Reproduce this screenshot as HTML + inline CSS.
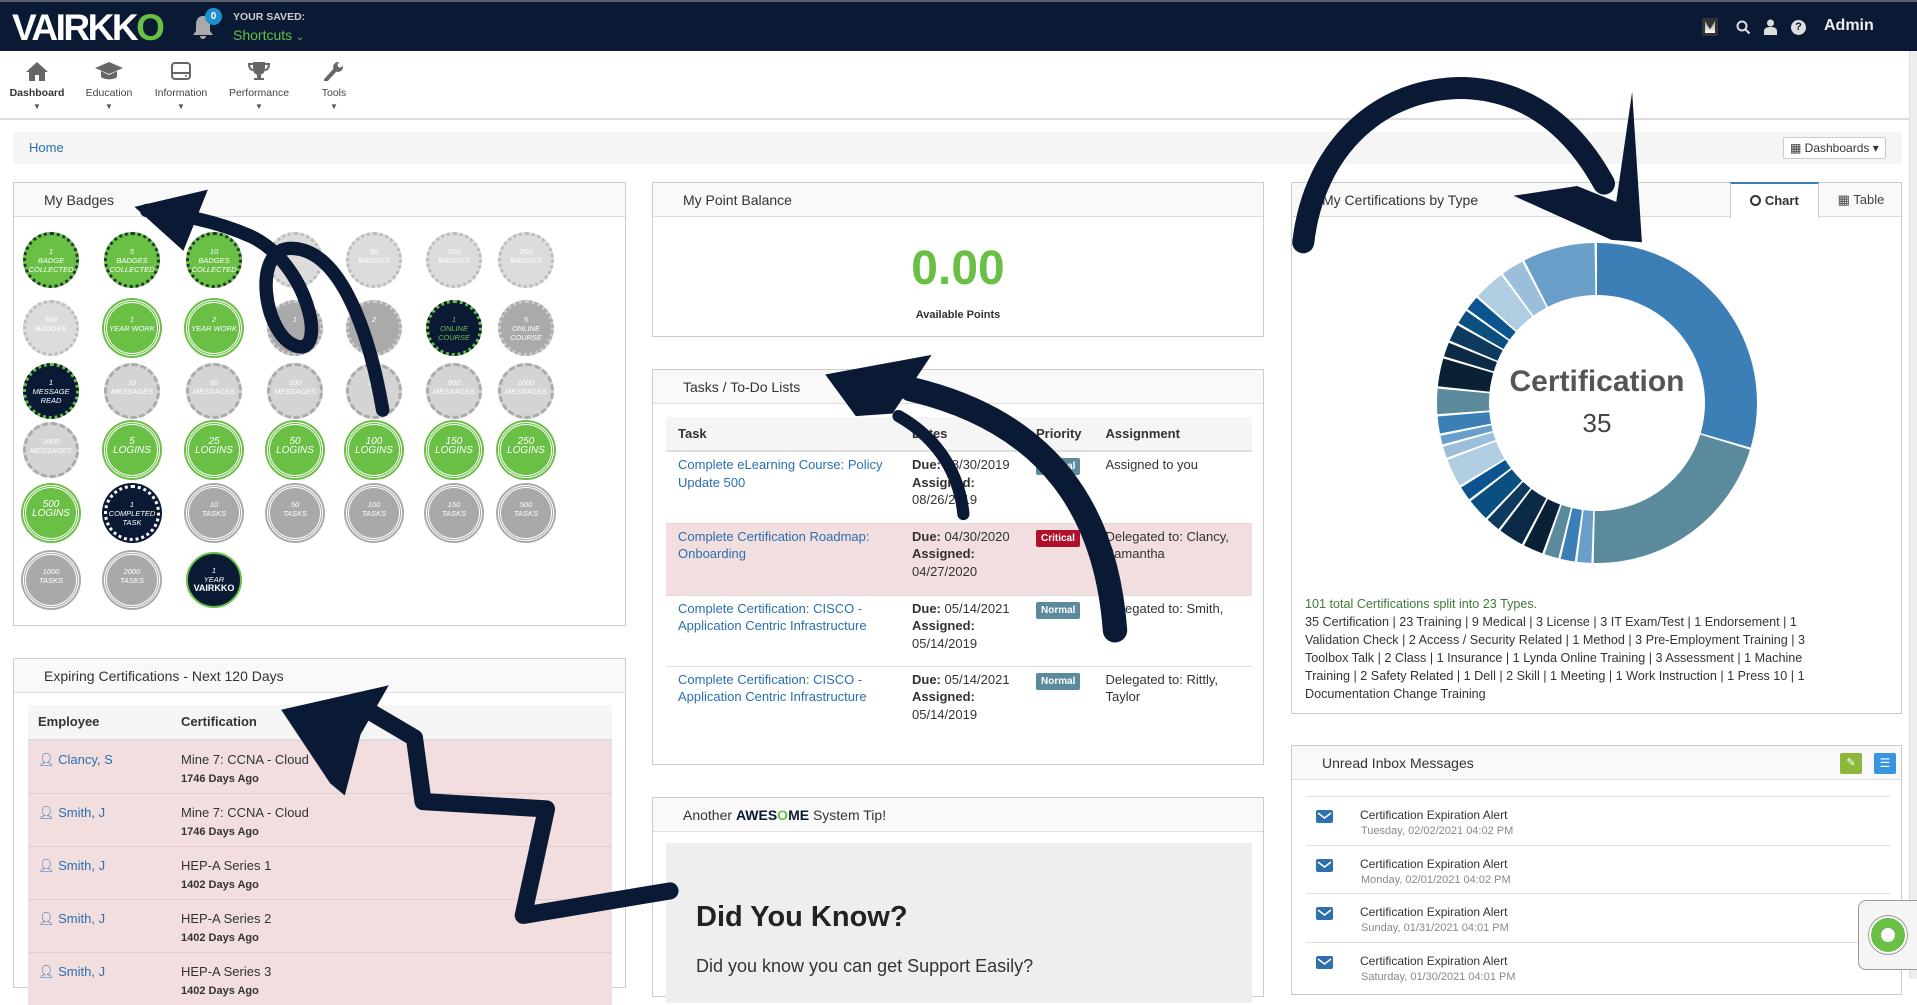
<!DOCTYPE html>
<html><head><meta charset="utf-8">
<style>
*{box-sizing:border-box;margin:0;padding:0}
body{width:1917px;height:979px;overflow:hidden;background:#fff;font-family:"Liberation Sans",sans-serif;font-size:13px;color:#333;position:relative}
.a{position:absolute}
.nav{left:0;top:0;width:1917px;height:51px;background:#0a1a35;border-top:2px solid #5a6070}
.menu{top:51px;left:0;width:1917px;height:69px;border-bottom:2px solid #ddd}
.mi{position:absolute;top:10px;text-align:center;font-size:10.5px;color:#444;width:80px;margin-left:-40px}
.mi svg{display:block;margin:0 auto 6px}
.mi .c{font-size:8px;color:#555;margin-top:3px}
.panel{position:absolute;border:1px solid #ccc;background:#fff}
.ph{height:34px;background:#f9f9f9;border-bottom:1px solid #ddd;padding:0 0 0 30px;line-height:34px;font-size:14px;color:#333}
.badge{position:absolute;width:56px;height:56px;border-radius:50%;margin:-28px 0 0 -28px;color:#fff;font-size:7.5px;text-align:center;line-height:9px;padding-top:12px;font-style:italic}
.g{background:#6abf45;border:3px dotted #1d3a2a}
.gw{background:#6abf45;border:3px double #fff;box-shadow:0 0 0 2px #6abf45}
.l{background:#dcdcdc;border:3px dotted #bbb}
.m{background:#aaa;border:3px dotted #ccc}
.n{background:#0a1a35;border:3px dotted #6abf45;color:#6abf45}
.lm{background:#d4d4d4;border:3px dashed #aaa}
.gm{background:#a9a9a9;border:3px double #fff;box-shadow:0 0 0 2px #aaa}
table{border-collapse:collapse}
.tk td{vertical-align:top;padding:4px 12px 0 12px;font-size:13px;line-height:17.5px;color:#333}
.tk a,.ex a{color:#2a6fb0;text-decoration:none}
.lbl{display:inline-block;color:#fff;font-size:10px;font-weight:bold;padding:2px 5px;border-radius:2px;line-height:13px}
.ex td{padding:0 10px;font-size:13px;line-height:18px;vertical-align:top}
.inb{position:absolute;left:14px;width:584px;border-top:1px solid #ddd;height:48px}
</style></head><body>
<div class="a nav">
 <div class="a" style="left:12px;top:7px;font-size:37px;font-weight:bold;color:#fff;letter-spacing:-2.5px;line-height:38px">VAIRKK<span style="color:#6abf45">O</span></div>
 <svg class="a" style="left:193px;top:12px" width="20" height="26" viewBox="0 0 20 26"><path d="M10 2c-5 0-7 4-7 9v6l-3 4h20l-3-4v-6c0-5-2-9-7-9zM7 22a3 3 0 0 0 6 0z" fill="#aaa"/></svg>
 <div class="a" style="left:205px;top:6px;width:17px;height:17px;border-radius:50%;background:#1e90d0;color:#fff;font-size:10px;font-weight:bold;text-align:center;line-height:17px">0</div>
 <div class="a" style="left:233px;top:9px;color:#ccc;font-size:10.5px;font-weight:bold">YOUR SAVED:</div>
 <div class="a" style="left:233px;top:25px;color:#6abf45;font-size:14px">Shortcuts <span style="font-size:10px">&#8964;</span></div>
 <div class="a" style="left:1702px;top:16px;width:16px;height:18px;background:#333;"><div style="margin:3px;width:10px;height:12px;background:linear-gradient(#999,#fff);clip-path:polygon(0 0,50% 70%,100% 0,100% 100%,0 100%)"></div></div>
 <svg class="a" style="left:1736px;top:18px" width="15" height="15" viewBox="0 0 15 15"><circle cx="6" cy="6" r="4.5" stroke="#ddd" stroke-width="2" fill="none"/><path d="M9.5 9.5l4 4" stroke="#ddd" stroke-width="2.2"/></svg>
 <svg class="a" style="left:1764px;top:17px" width="13" height="16" viewBox="0 0 13 16"><circle cx="6.5" cy="4" r="3.5" fill="#ddd"/><path d="M0 16v-4c0-3 3-4 6.5-4s6.5 1 6.5 4v4z" fill="#ddd"/></svg>
 <div class="a" style="left:1791px;top:18px;width:15px;height:15px;border-radius:50%;background:#ddd;color:#0a1a35;font-size:11px;font-weight:bold;text-align:center;line-height:15px">?</div>
 <div class="a" style="left:1824px;top:15px;color:#eee;font-size:16px;font-weight:bold">Admin</div>
</div>
<div class="a menu">
 <div class="mi" style="left:37px;font-weight:bold;color:#333"><svg width="22" height="20" viewBox="0 0 22 20"><path d="M11 1L0 11h3v9h6v-6h4v6h6v-9h3z" fill="#666"/></svg>Dashboard<div class="c">&#9660;</div></div>
 <div class="mi" style="left:109px"><svg width="28" height="20" viewBox="0 0 28 20"><path d="M14 1L0 7l14 6 14-6z" fill="#666"/><path d="M6 10v6c3 3 13 3 16 0v-6l-8 4z" fill="#666"/></svg>Education<div class="c">&#9660;</div></div>
 <div class="mi" style="left:181px"><svg width="22" height="20" viewBox="0 0 22 20"><rect x="2" y="2" width="18" height="16" rx="3" fill="none" stroke="#666" stroke-width="2"/><path d="M2 12h18" stroke="#666" stroke-width="2"/><circle cx="16" cy="15" r="1" fill="#666"/></svg>Information<div class="c">&#9660;</div></div>
 <div class="mi" style="left:259px"><svg width="22" height="20" viewBox="0 0 22 20"><path d="M5 1h12v7c0 4-3 6-6 6s-6-2-6-6z M9 14h4v3h3v2H6v-2h3z" fill="#666"/><path d="M5 3H1c0 4 2 6 4 6M17 3h4c0 4-2 6-4 6" stroke="#666" stroke-width="2" fill="none"/></svg>Performance<div class="c">&#9660;</div></div>
 <div class="mi" style="left:334px"><svg width="22" height="20" viewBox="0 0 22 20"><path d="M3 19L13 8" stroke="#666" stroke-width="4" stroke-linecap="round"/><circle cx="15" cy="6" r="5" fill="#666"/><circle cx="17" cy="4" r="2.5" fill="#fff"/></svg>Tools<div class="c">&#9660;</div></div>
</div>
<div class="a" style="left:13px;top:132px;width:1889px;height:32px;background:#f5f5f5">
 <span class="a" style="left:16px;top:8px;color:#2a6fb0;font-size:13px">Home</span>
 <div class="a" style="left:1770px;top:5px;width:103px;height:22px;border:1px solid #ccc;background:#fff;border-radius:2px;font-size:12px;line-height:20px;padding-left:6px">&#9638; Dashboards &#9662;</div>
</div>
<div class="a" style="left:1909px;top:51px;width:8px;height:928px;background:#eee;border-left:1px solid #ddd"></div>

<!-- Badges -->
<div class="panel" style="left:13px;top:182px;width:613px;height:444px"><div class="ph">My Badges</div></div>
<div class="badge g" style="left:51px;top:260px">1<br>BADGE<br>COLLECTED</div>
<div class="badge g" style="left:132px;top:260px">5<br>BADGES<br>COLLECTED</div>
<div class="badge g" style="left:214px;top:260px">10<br>BADGES<br>COLLECTED</div>
<div class="badge l" style="left:295px;top:260px">25</div>
<div class="badge l" style="left:374px;top:260px">50<br>BADGES</div>
<div class="badge l" style="left:454px;top:260px">100<br>BADGES</div>
<div class="badge l" style="left:526px;top:260px">250<br>BADGES</div>
<div class="badge l" style="left:51px;top:328px">500<br>BADGES</div>
<div class="badge gw" style="left:132px;top:328px">1<br>YEAR WORK</div>
<div class="badge gw" style="left:214px;top:328px">2<br>YEAR WORK</div>
<div class="badge m" style="left:295px;top:328px">1</div>
<div class="badge m" style="left:374px;top:328px">2</div>
<div class="badge n" style="left:454px;top:328px">1<br>ONLINE COURSE</div>
<div class="badge m" style="left:526px;top:328px">5<br>ONLINE COURSE</div>
<div class="badge n" style="left:51px;top:391px;color:#fff">1<br>MESSAGE<br>READ</div>
<div class="badge lm" style="left:132px;top:391px">10<br>MESSAGES</div>
<div class="badge lm" style="left:214px;top:391px">50<br>MESSAGES</div>
<div class="badge lm" style="left:295px;top:391px">100<br>MESSAGES</div>
<div class="badge lm" style="left:374px;top:391px">250</div>
<div class="badge lm" style="left:454px;top:391px">500<br>MESSAGES</div>
<div class="badge lm" style="left:526px;top:391px">1000<br>MESSAGES</div>
<div class="badge lm" style="left:51px;top:450px">2000<br>MESSAGES</div>
<div class="badge gw" style="left:132px;top:450px;font-size:10px">5<br>LOGINS</div>
<div class="badge gw" style="left:214px;top:450px;font-size:10px">25<br>LOGINS</div>
<div class="badge gw" style="left:295px;top:450px;font-size:10px">50<br>LOGINS</div>
<div class="badge gw" style="left:374px;top:450px;font-size:10px">100<br>LOGINS</div>
<div class="badge gw" style="left:454px;top:450px;font-size:10px">150<br>LOGINS</div>
<div class="badge gw" style="left:526px;top:450px;font-size:10px">250<br>LOGINS</div>
<div class="badge gw" style="left:51px;top:513px;font-size:10px">500<br>LOGINS</div>
<div class="badge n" style="left:132px;top:513px;color:#fff;border-color:#fff;box-shadow:0 0 0 2px #0a1a35">1<br>COMPLETED<br>TASK</div>
<div class="badge gm" style="left:214px;top:513px">10<br>TASKS</div>
<div class="badge gm" style="left:295px;top:513px">50<br>TASKS</div>
<div class="badge gm" style="left:374px;top:513px">100<br>TASKS</div>
<div class="badge gm" style="left:454px;top:513px">150<br>TASKS</div>
<div class="badge gm" style="left:526px;top:513px">500<br>TASKS</div>
<div class="badge gm" style="left:51px;top:580px">1000<br>TASKS</div>
<div class="badge gm" style="left:132px;top:580px">2000<br>TASKS</div>
<div class="badge" style="left:214px;top:580px;background:#0a1a35;border:2px solid #6abf45">1<br>YEAR<br><b style="font-style:normal;font-size:9px">VAIRKKO</b></div>

<!-- Expiring -->
<div class="panel" style="left:13px;top:658px;width:613px;height:330px"><div class="ph">Expiring Certifications - Next 120 Days</div>
 <table class="ex a" style="left:14px;top:46px;width:584px">
  <tr style="background:#f5f5f5;height:35px;border-bottom:2px solid #ddd"><td style="width:143px;font-weight:bold;vertical-align:middle">Employee</td><td style="font-weight:bold;vertical-align:middle">Certification</td></tr>
  <tr style="background:#f2dede;height:53px;border-bottom:1px solid #e5cccc"><td style="padding-top:10px"><a>&#128100;&#xFE0E; Clancy, S</a></td><td style="padding-top:10px">Mine 7: CCNA - Cloud<br><b style="font-size:11px">1746 Days Ago</b></td></tr>
  <tr style="background:#f2dede;height:53px;border-bottom:1px solid #e5cccc"><td style="padding-top:10px"><a>&#128100;&#xFE0E; Smith, J</a></td><td style="padding-top:10px">Mine 7: CCNA - Cloud<br><b style="font-size:11px">1746 Days Ago</b></td></tr>
  <tr style="background:#f2dede;height:53px;border-bottom:1px solid #e5cccc"><td style="padding-top:10px"><a>&#128100;&#xFE0E; Smith, J</a></td><td style="padding-top:10px">HEP-A Series 1<br><b style="font-size:11px">1402 Days Ago</b></td></tr>
  <tr style="background:#f2dede;height:53px;border-bottom:1px solid #e5cccc"><td style="padding-top:10px"><a>&#128100;&#xFE0E; Smith, J</a></td><td style="padding-top:10px">HEP-A Series 2<br><b style="font-size:11px">1402 Days Ago</b></td></tr>
  <tr style="background:#f2dede;height:53px"><td style="padding-top:10px"><a>&#128100;&#xFE0E; Smith, J</a></td><td style="padding-top:10px">HEP-A Series 3<br><b style="font-size:11px">1402 Days Ago</b></td></tr>
 </table>
</div>

<!-- Point balance -->
<div class="panel" style="left:652px;top:182px;width:612px;height:155px"><div class="ph">My Point Balance</div>
 <div class="a" style="left:0;width:100%;top:58px;text-align:center;color:#6abf45;font-size:48px;font-weight:bold">0.00</div>
 <div class="a" style="left:0;width:100%;top:126px;text-align:center;font-size:11px;font-weight:bold">Available Points</div>
</div>

<!-- Tasks -->
<div class="panel" style="left:652px;top:369px;width:612px;height:396px"><div class="ph">Tasks / To-Do Lists</div>
 <table class="tk a" style="left:13px;top:47px;width:586px">
  <tr style="background:#f5f5f5;height:34px;border-bottom:2px solid #ddd"><td style="vertical-align:middle;padding-top:0;font-weight:bold;width:234px">Task</td><td style="vertical-align:middle;padding-top:0;font-weight:bold;width:124px">Dates</td><td style="vertical-align:middle;padding-top:0;font-weight:bold;width:69px">Priority</td><td style="vertical-align:middle;padding-top:0;font-weight:bold">Assignment</td></tr>
  <tr style="height:72px;border-bottom:1px solid #ddd"><td><a>Complete eLearning Course: Policy Update 500</a></td><td><b>Due:</b> 08/30/2019<br><b>Assigned:</b><br>08/26/2019</td><td><span class="lbl" style="background:#5a8a9b">Normal</span></td><td>Assigned to you</td></tr>
  <tr style="height:72px;background:#f2dede;border-bottom:1px solid #ddd"><td><a>Complete Certification Roadmap: Onboarding</a></td><td><b>Due:</b> 04/30/2020<br><b>Assigned:</b><br>04/27/2020</td><td><span class="lbl" style="background:#b0102a">Critical</span></td><td>Delegated to: Clancy, Samantha</td></tr>
  <tr style="height:71px;border-bottom:1px solid #ddd"><td><a>Complete Certification: CISCO - Application Centric Infrastructure</a></td><td><b>Due:</b> 05/14/2021<br><b>Assigned:</b><br>05/14/2019</td><td><span class="lbl" style="background:#5a8a9b">Normal</span></td><td>Delegated to: Smith, Jill</td></tr>
  <tr style="height:72px"><td><a>Complete Certification: CISCO - Application Centric Infrastructure</a></td><td><b>Due:</b> 05/14/2021<br><b>Assigned:</b><br>05/14/2019</td><td><span class="lbl" style="background:#5a8a9b">Normal</span></td><td>Delegated to: Rittly, Taylor</td></tr>
 </table>
</div>

<!-- Tip -->
<div class="panel" style="left:652px;top:797px;width:612px;height:200px"><div class="ph">Another <b style="color:#0a1a35">AWES<span style="color:#6abf45">O</span>ME</b> System Tip!</div>
 <div class="a" style="left:13px;top:45px;width:586px;height:160px;background:#eee">
  <div class="a" style="left:30px;top:58px;font-size:29px;font-weight:bold;color:#222">Did You Know?</div>
  <div class="a" style="left:30px;top:113px;font-size:18px;color:#333">Did you know you can get Support Easily?</div>
 </div>
</div>

<!-- Certifications -->
<div class="panel" style="left:1291px;top:182px;width:611px;height:532px"><div class="ph">My Certifications by Type</div>
 <div class="a" style="left:438px;top:-1px;width:89px;height:36px;background:#fff;border:1px solid #ccc;border-top:2px solid #3c7fb6;border-bottom:none;font-weight:bold;font-size:13px;line-height:33px;text-align:center"><span style="display:inline-block;width:11px;height:11px;border:2px solid #333;border-radius:50%;vertical-align:-1px"></span> Chart</div>
 <div class="a" style="left:527px;top:0;width:84px;height:34px;font-size:13px;line-height:34px;text-align:center;color:#444">&#9638; Table</div>
 <div class="a" style="left:13px;top:412px;font-size:12.6px;line-height:18px;color:#333;white-space:nowrap"><span style="color:#3f7a3a">101 total Certifications split into 23 Types.</span><br>35 Certification | 23 Training | 9 Medical | 3 License | 3 IT Exam/Test | 1 Endorsement | 1<br>Validation Check | 2 Access / Security Related | 1 Method | 3 Pre-Employment Training | 3<br>Toolbox Talk | 2 Class | 1 Insurance | 1 Lynda Online Training | 3 Assessment | 1 Machine<br>Training | 2 Safety Related | 1 Dell | 2 Skill | 1 Meeting | 1 Work Instruction | 1 Press 10 | 1<br>Documentation Change Training</div>
</div>
<svg class="a" style="left:1437px;top:243px" width="320" height="320" viewBox="0 0 320 320">
<g fill="none" stroke-width="52">
<circle cx="160" cy="160" r="134" stroke="#3c7fb6" stroke-dasharray="248.3 842" transform="rotate(-90 160 160)"/>
<circle cx="160" cy="160" r="134" stroke="#5a8a9b" stroke-dasharray="173.4 842" transform="rotate(17 160 160)"/>
<circle cx="160" cy="160" r="134" stroke="#6a9fca" stroke-dasharray="12 842" transform="rotate(92 160 160)"/>
<circle cx="160" cy="160" r="134" stroke="#3c7fb6" stroke-dasharray="12 842" transform="rotate(98 160 160)"/>
<circle cx="160" cy="160" r="134" stroke="#5a8a9b" stroke-dasharray="12 842" transform="rotate(104 160 160)"/>
<circle cx="160" cy="160" r="134" stroke="#0a2135" stroke-dasharray="16.7 842" transform="rotate(110 160 160)"/>
<circle cx="160" cy="160" r="134" stroke="#0b2a45" stroke-dasharray="21.4 842" transform="rotate(118 160 160)"/>
<circle cx="160" cy="160" r="134" stroke="#0d3a5e" stroke-dasharray="12 842" transform="rotate(128 160 160)"/>
<circle cx="160" cy="160" r="134" stroke="#0b4e80" stroke-dasharray="19 842" transform="rotate(134 160 160)"/>
<circle cx="160" cy="160" r="134" stroke="#0b5490" stroke-dasharray="12 842" transform="rotate(143 160 160)"/>
<circle cx="160" cy="160" r="134" stroke="#b0cde2" stroke-dasharray="23.7 842" transform="rotate(149 160 160)"/>
<circle cx="160" cy="160" r="134" stroke="#9bbedb" stroke-dasharray="9.7 842" transform="rotate(160 160 160)"/>
<circle cx="160" cy="160" r="134" stroke="#6a9fca" stroke-dasharray="7.4 842" transform="rotate(165 160 160)"/>
<circle cx="160" cy="160" r="134" stroke="#3c7fb6" stroke-dasharray="14.4 842" transform="rotate(169 160 160)"/>
<circle cx="160" cy="160" r="134" stroke="#5a8a9b" stroke-dasharray="21.4 842" transform="rotate(176 160 160)"/>
<circle cx="160" cy="160" r="134" stroke="#0a2135" stroke-dasharray="23.7 842" transform="rotate(186 160 160)"/>
<circle cx="160" cy="160" r="134" stroke="#0b2a45" stroke-dasharray="12 842" transform="rotate(197 160 160)"/>
<circle cx="160" cy="160" r="134" stroke="#0d3a5e" stroke-dasharray="14.4 842" transform="rotate(203 160 160)"/>
<circle cx="160" cy="160" r="134" stroke="#0b4e80" stroke-dasharray="12 842" transform="rotate(210 160 160)"/>
<circle cx="160" cy="160" r="134" stroke="#0b5490" stroke-dasharray="12 842" transform="rotate(216 160 160)"/>
<circle cx="160" cy="160" r="134" stroke="#b0cde2" stroke-dasharray="26.1 842" transform="rotate(222 160 160)"/>
<circle cx="160" cy="160" r="134" stroke="#9bbedb" stroke-dasharray="19 842" transform="rotate(234 160 160)"/>
<circle cx="160" cy="160" r="134" stroke="#6a9fca" stroke-dasharray="61.1 842" transform="rotate(243 160 160)"/>
</g>
<text x="160" y="148" text-anchor="middle" font-family="Liberation Sans" font-weight="bold" font-size="30" fill="#555">Certification</text>
<text x="160" y="189" text-anchor="middle" font-family="Liberation Sans" font-size="26" fill="#444">35</text>
</svg>

<!-- Inbox -->
<div class="panel" style="left:1291px;top:745px;width:611px;height:250px"><div class="ph">Unread Inbox Messages</div>
 <div class="a" style="left:548px;top:7px;width:22px;height:21px;background:#8bb83a;border-radius:2px;color:#fff;font-size:11px;text-align:center;line-height:21px">&#9998;</div>
 <div class="a" style="left:582px;top:7px;width:22px;height:21px;background:#3a95e0;border-radius:2px;color:#fff;font-size:12px;text-align:center;line-height:21px">&#9776;</div>
 <div class="inb" style="top:50px"><div class="a" style="left:10px;top:13px;width:17px;height:13px;background:#2f6fb0;border-radius:2px"><svg width="17" height="13"><path d="M2 3l6.5 5 6.5-5" stroke="#fff" stroke-width="1.5" fill="none"/></svg></div><div class="a" style="left:54px;top:11px;font-size:12px">Certification Expiration Alert</div><div class="a" style="left:55px;top:28px;font-size:11px;color:#888">Tuesday, 02/02/2021 04:02 PM</div></div>
 <div class="inb" style="top:99px"><div class="a" style="left:10px;top:13px;width:17px;height:13px;background:#2f6fb0;border-radius:2px"><svg width="17" height="13"><path d="M2 3l6.5 5 6.5-5" stroke="#fff" stroke-width="1.5" fill="none"/></svg></div><div class="a" style="left:54px;top:11px;font-size:12px">Certification Expiration Alert</div><div class="a" style="left:55px;top:28px;font-size:11px;color:#888">Monday, 02/01/2021 04:02 PM</div></div>
 <div class="inb" style="top:147px"><div class="a" style="left:10px;top:13px;width:17px;height:13px;background:#2f6fb0;border-radius:2px"><svg width="17" height="13"><path d="M2 3l6.5 5 6.5-5" stroke="#fff" stroke-width="1.5" fill="none"/></svg></div><div class="a" style="left:54px;top:11px;font-size:12px">Certification Expiration Alert</div><div class="a" style="left:55px;top:28px;font-size:11px;color:#888">Sunday, 01/31/2021 04:01 PM</div></div>
 <div class="inb" style="top:196px"><div class="a" style="left:10px;top:13px;width:17px;height:13px;background:#2f6fb0;border-radius:2px"><svg width="17" height="13"><path d="M2 3l6.5 5 6.5-5" stroke="#fff" stroke-width="1.5" fill="none"/></svg></div><div class="a" style="left:54px;top:11px;font-size:12px">Certification Expiration Alert</div><div class="a" style="left:55px;top:28px;font-size:11px;color:#888">Saturday, 01/30/2021 04:01 PM</div></div>
</div>
<div class="a" style="left:1858px;top:900px;width:70px;height:70px;background:#f5f5f5;border:1px solid #999;border-radius:8px"></div>
<div class="a" style="left:1869px;top:916px;width:38px;height:38px;border-radius:50%;background:#6abf45;border:2px solid #fff;box-shadow:0 0 0 1px #999"><div style="margin:10px;width:14px;height:14px;border-radius:50%;background:#fff"></div></div>

<!-- arrows -->
<svg class="a" style="left:0;top:0" width="1917" height="979" viewBox="0 0 1568 800" preserveAspectRatio="none">
<g fill="none" stroke="#0a1a35" stroke-linecap="round" stroke-linejoin="round">
 <path d="M1066,198 C1075,120 1130,70 1200,72 C1255,75 1290,110 1312,150" stroke-width="18"/>
 <path d="M912,515 C905,420 860,345 745,318" stroke-width="20"/>
 <path d="M735,340 C770,360 785,390 788,420" stroke-width="10"/>
 <path d="M313,335 C300,260 275,205 240,203 C205,200 215,275 243,283 C268,290 252,215 205,193 C175,180 145,175 120,172" stroke-width="11"/>
 <path d="M548,728 L428,748 L447,661 L346,655 L339,603 L300,580" stroke-width="14"/>
</g>
<g fill="#0a1a35">
 <polygon points="1335,75 1343,198 1318,196 1238,160 1290,152 1322,165"/>
 <polygon points="675,306 762,290 730,338 700,340"/>
 <polygon points="110,169 170,155 150,205"/>
 <polygon points="230,580 318,560 295,600 282,650 270,640"/>
</g>
</svg>
</body></html>
